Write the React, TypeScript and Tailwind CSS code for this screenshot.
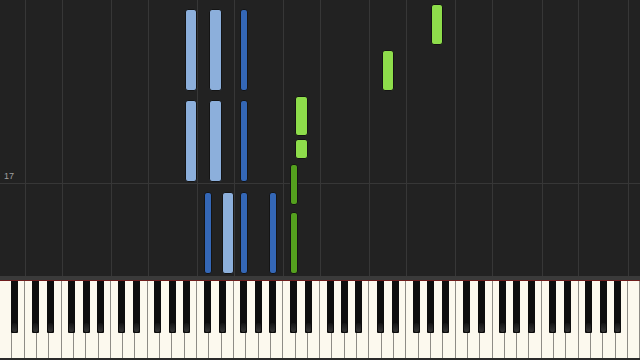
import React from 'react';

const WHITE = 640 / 52;

// black key offsets from the white key boundary, by note name
const blackOffset: Record<string, number> = {'C#': -1.4, 'D#': 1.3, 'F#': -2.3, 'G#': 0, 'A#': 2};
const whiteNames = ['A', 'B', 'C', 'D', 'E', 'F', 'G'];

interface Note {
	x: number;
	w: number;
	top: number;
	bottom: number;
	color: string;
}

const whiteNote = (index: number, top: number, bottom: number, color: string): Note => ({
	x: index * WHITE,
	w: WHITE,
	top,
	bottom,
	color,
});

const blackNote = (boundary: number, offset: number, top: number, bottom: number, color: string): Note => ({
	x: boundary * WHITE + offset - 4,
	w: 8,
	top,
	bottom,
	color,
});

const LIGHT_BLUE = 'bg-[#8cafdb]';
const DARK_BLUE = 'bg-[#3467b6]';
const LIGHT_GREEN = 'bg-[#8edd4b]';
const DARK_GREEN = 'bg-[#54a01e]';

const notes: Note[] = [
	whiteNote(15, 9, 91, LIGHT_BLUE),
	whiteNote(15, 100, 182, LIGHT_BLUE),
	whiteNote(17, 9, 91, LIGHT_BLUE),
	whiteNote(17, 100, 182, LIGHT_BLUE),
	blackNote(20, -2.2, 9, 91, DARK_BLUE),
	blackNote(20, -2.2, 100, 182, DARK_BLUE),
	blackNote(20, -2.2, 192, 274, DARK_BLUE),
	blackNote(17, -1, 192, 274, DARK_BLUE),
	whiteNote(18, 192, 274, LIGHT_BLUE),
	blackNote(22, 2, 192, 274, DARK_BLUE),
	whiteNote(24, 96, 136, LIGHT_GREEN),
	whiteNote(24, 139, 159, LIGHT_GREEN),
	blackNote(24, -1.2, 164, 205, DARK_GREEN),
	blackNote(24, -1.2, 212, 274, DARK_GREEN),
	whiteNote(31, 50, 91, LIGHT_GREEN),
	whiteNote(35, 4, 45, LIGHT_GREEN),
];

// vertical guide lines sit on every C and F
const gridLines: number[] = [];
for (let i = 0; i < 52; i++) {
	const name = whiteNames[i % 7];
	if ((name === 'C' || name === 'F') && i > 0) gridLines.push(i * WHITE);
}

const blackKeys: number[] = [];
for (let i = 0; i < 51; i++) {
	const name = whiteNames[i % 7];
	if (name === 'B' || name === 'E') continue;
	const offset = blackOffset[`${name}#`];
	blackKeys.push((i + 1) * WHITE + offset);
}

const Roll: React.FC = () => (
	<div className="relative h-[276px] bg-[#222222] overflow-hidden">
		{gridLines.map(x => (
			<div key={x} className="absolute top-0 bottom-0 w-px bg-[#373737]" style={{left: Math.round(x)}} />
		))}
		<div className="absolute left-0 right-0 top-[183px] h-px bg-[#373737]" />
		<span className="absolute left-[4px] top-[172px] text-[9px] leading-none text-[#a0a0a0] font-['Liberation_Sans',sans-serif]">
			17
		</span>
		{notes.map((n, i) => (
			<div
				key={i}
				className={`absolute rounded-[3px] border border-[#141414] ${n.color}`}
				style={{left: n.x, width: n.w, top: n.top, height: n.bottom - n.top}}
			/>
		))}
	</div>
);

const Keyboard: React.FC = () => (
	<div className="relative flex h-[79px] bg-[#2a2a2a]">
		{Array.from({length: 52}).map((_, i) => (
			<div
				key={i}
				className="flex-1 h-[77px] bg-[#fcf9ee] border-r border-[#8e8c86] last:border-r-0"
			/>
		))}
		{blackKeys.map(c => (
			<div
				key={c}
				className="absolute top-0 w-[7px] h-[52px] bg-[#0d0d0d] rounded-b-[1px] flex flex-col justify-end pb-[1px]"
				style={{left: c - 3.5}}
			>
				<div className="mx-[1px] h-[9px] rounded-[2px] bg-gradient-to-b from-[#141414] to-[#343434]" />
			</div>
		))}
	</div>
);

export default function App() {
	return (
		<div className="w-[640px] h-[360px] flex flex-col overflow-hidden bg-[#222222]">
			<Roll />
			<div className="h-[4px] bg-[#3a3a3a]" />
			<div className="h-px bg-[#6e1d1d]" />
			<Keyboard />
		</div>
	);
}
